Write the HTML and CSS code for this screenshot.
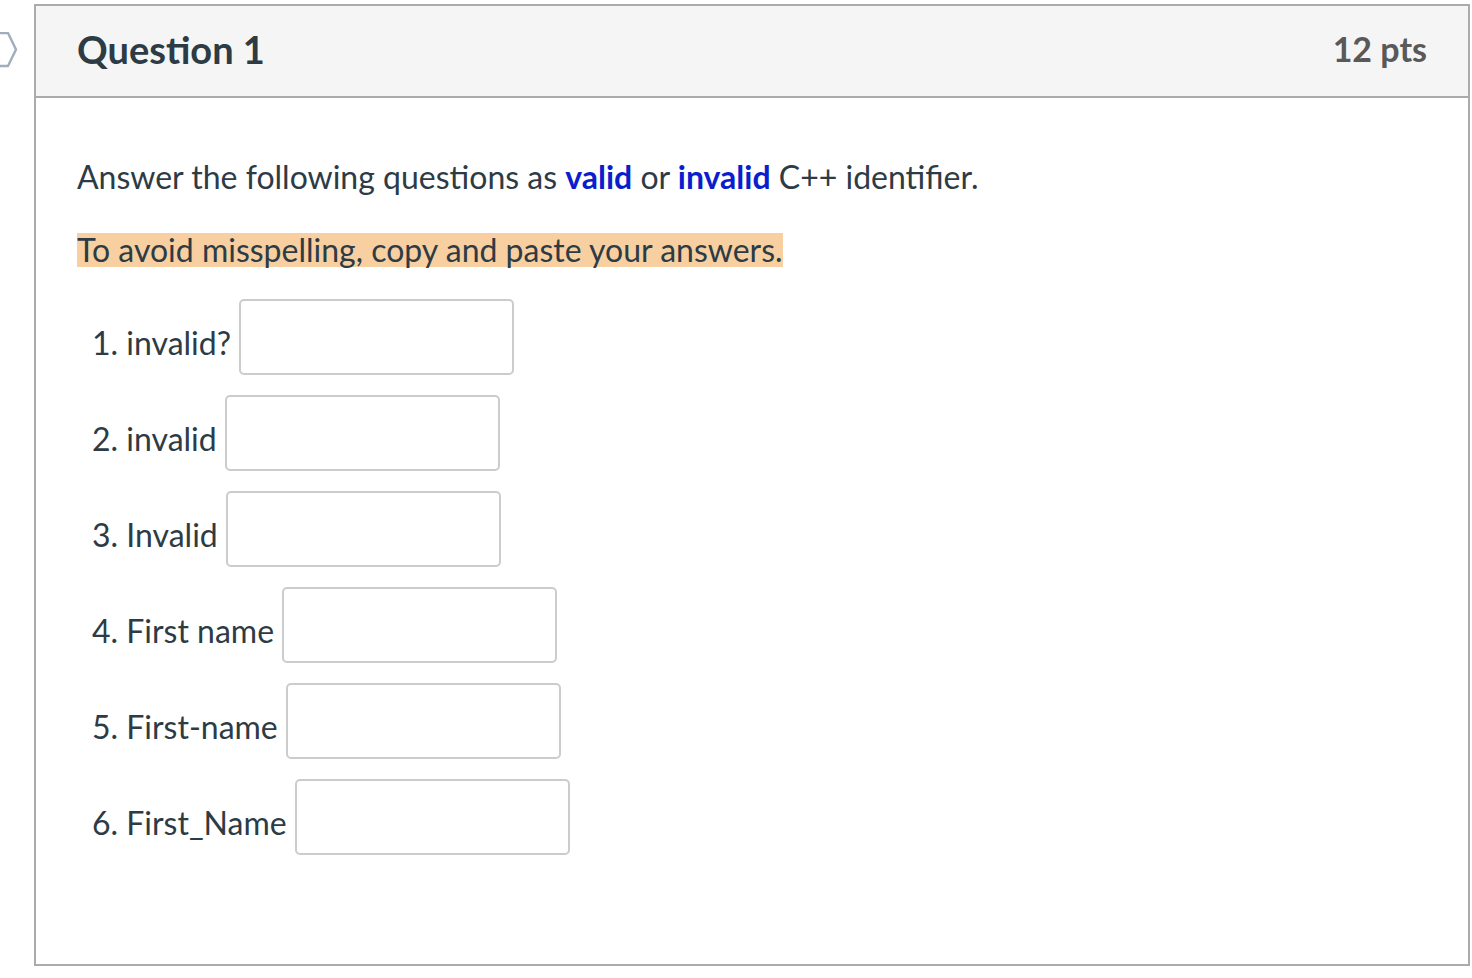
FILE: index.html
```html
<!DOCTYPE html>
<html>
<head>
<meta charset="utf-8">
<link rel="stylesheet" href="styles.css">
</head>
<body>
<div class="page">
  <svg class="flag" width="20" height="40" viewBox="0 0 20 40">
    <polygon points="-12,1 8,1 16,17.5 8,34 -12,34" fill="none" stroke="#a0adbb" stroke-width="2.4" stroke-linejoin="round"/>
  </svg>
  <div class="card">
    <div class="card-header">
      <h2 class="q-title">Question 1</h2>
      <div class="q-pts">12 pts</div>
    </div>
    <div class="card-body">
      <p class="intro">Answer the following questions as <b class="blue">valid</b> or <b class="blue">invalid</b> C++ identifier.</p>
      <p class="note"><span class="hl">To avoid misspelling, copy and paste your answers.</span></p>
      <div class="rows">
        <div class="row"><span class="label">1. invalid?</span><input class="answer" type="text"></div>
        <div class="row"><span class="label">2. invalid</span><input class="answer" type="text"></div>
        <div class="row"><span class="label">3. Invalid</span><input class="answer" type="text"></div>
        <div class="row"><span class="label">4. First name</span><input class="answer" type="text"></div>
        <div class="row"><span class="label">5. First-name</span><input class="answer" type="text"></div>
        <div class="row"><span class="label">6. First_Name</span><input class="answer" type="text"></div>
      </div>
    </div>
  </div>
</div>
</body>
</html>
```
FILE: styles.css
```css
html, body {
  margin: 0;
  padding: 0;
  background: #ffffff;
}
body {
  font-family: Lato, "Open Sans", sans-serif;
  color: #2d3b45;
}
.page {
  position: relative;
  padding: 4px 0 0 34px;
}
.flag {
  position: absolute;
  left: 0;
  top: 32px;
}
.card {
  width: 1432px;
  height: 958px;
  border: 2px solid #ababab;
  display: flex;
  flex-direction: column;
}
.card-header {
  box-sizing: border-box;
  height: 92px;
  background: #f5f5f5;
  border-bottom: 2px solid #ababab;
  display: flex;
  align-items: center;
  justify-content: space-between;
  padding: 0 41px 5px 41px;
}
.q-title {
  margin: 0;
  font-size: 38px;
  font-weight: 700;
  color: #2d3b45;
}
.q-pts {
  font-size: 34px;
  font-weight: 700;
  color: #595959;
}
.card-body {
  padding: 55px 41px 0 41px;
}
.intro {
  margin: 0;
  font-size: 32px;
  line-height: 48px;
}
.note {
  margin: 32px 0 0 0;
  font-size: 32px;
  line-height: 34px;
  height: 34px;
}
.blue {
  color: #0a1ecc;
  font-weight: 700;
}
.hl {
  display: inline-block;
  background: #f7cfa0;
  line-height: 34px;
  height: 34px;
}
.rows {
  display: flex;
  flex-direction: column;
  gap: 20px;
  padding-left: 15px;
  margin-top: 32px;
}
.row {
  display: flex;
  align-items: center;
  gap: 8px;
  font-size: 32px;
}
.label {
  margin-top: 10px;
}
.answer {
  flex: none;
  box-sizing: border-box;
  width: 275px;
  height: 76px;
  border: 2px solid #cccccc;
  border-radius: 5px;
  background: #fff;
  margin: 0;
  font: inherit;
}
```
